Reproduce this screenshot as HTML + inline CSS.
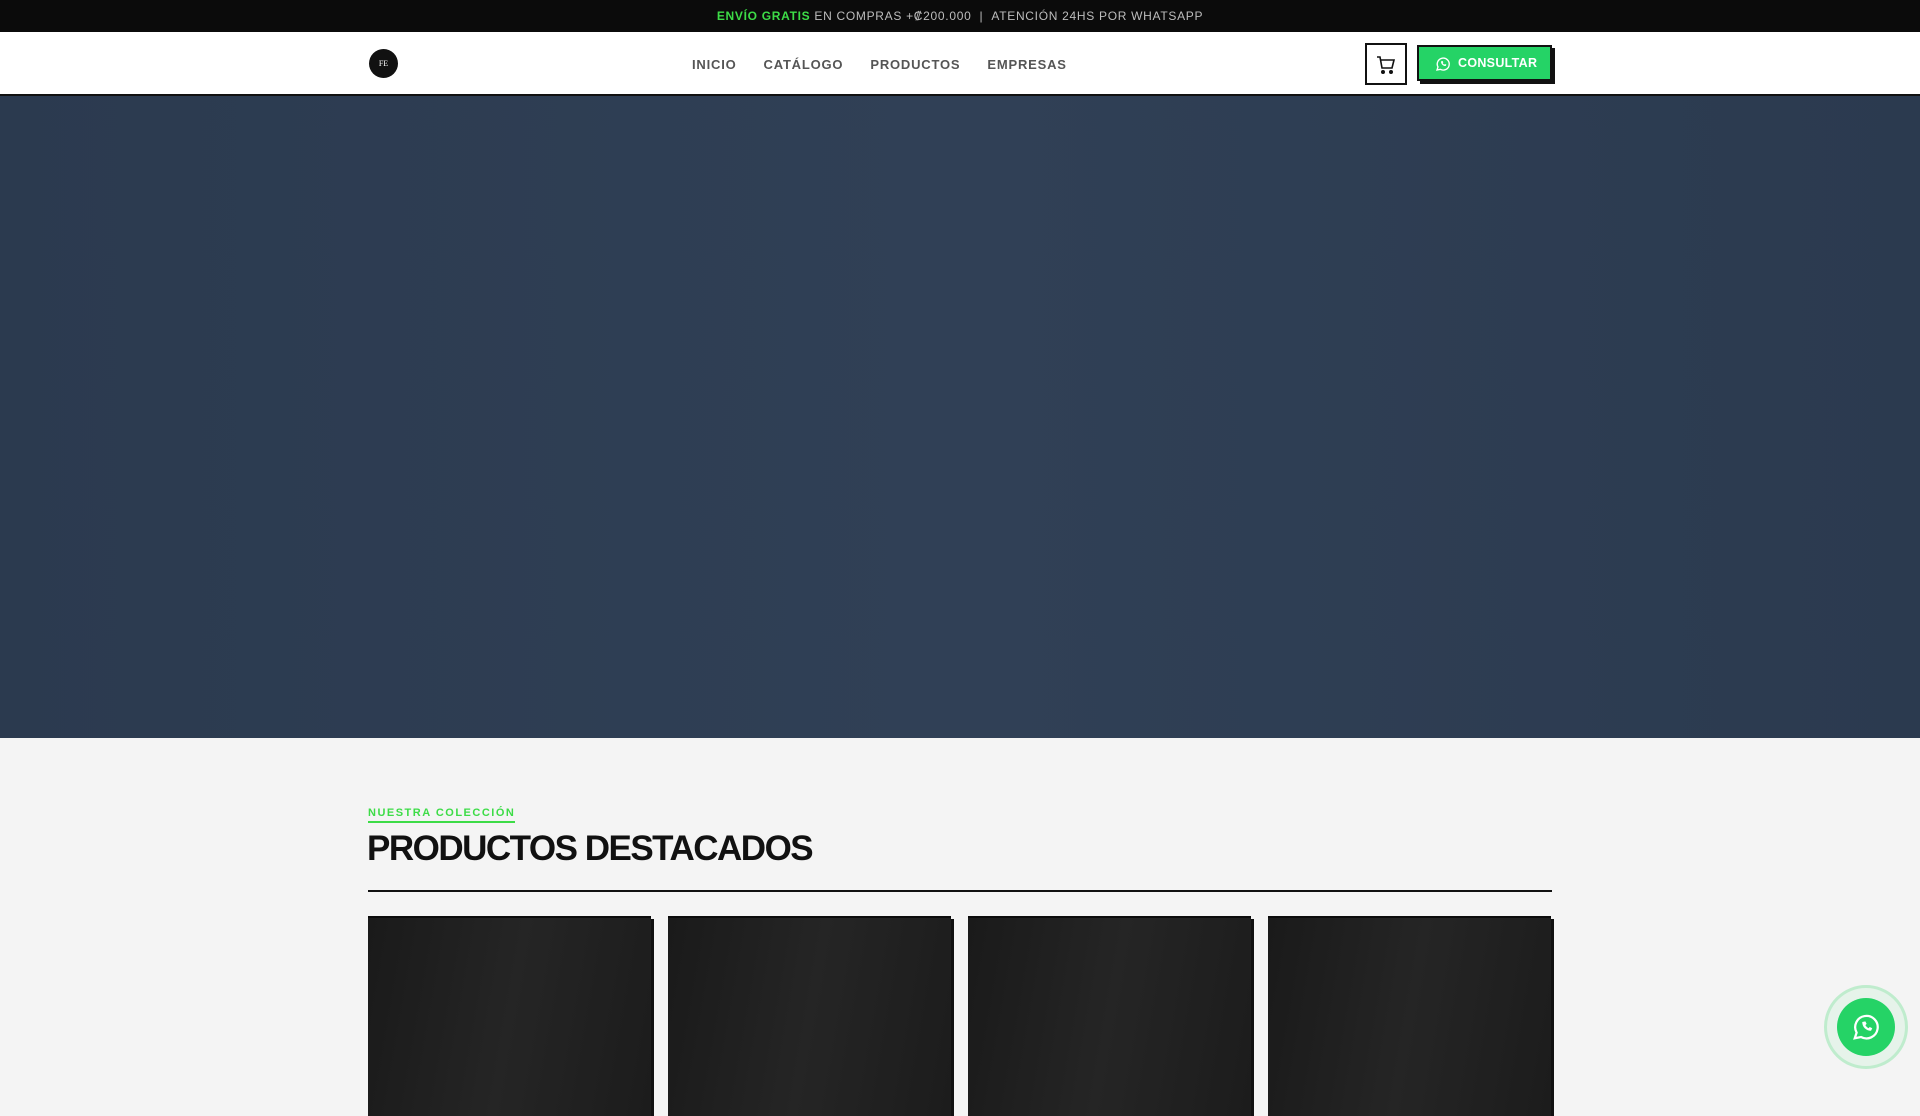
<!DOCTYPE html>
<html><head><meta charset="utf-8"><style>
*{margin:0;padding:0;box-sizing:border-box}
body{width:1920px;height:1080px;overflow:hidden;background:#f4f4f4;font-family:"Liberation Sans",sans-serif;position:relative}
.top{height:32px;background:#0b0b0b;color:#bdbdbd;font-size:12px;letter-spacing:.7px;text-align:center;line-height:32px}
.top b{color:#3ddc47}
.nav{height:64px;background:#fff;border-bottom:2px solid #111;position:relative}
.logo{position:absolute;left:369px;top:17px;width:29px;height:29px;border-radius:50%;background:#111;color:#fff;font-size:8px;font-family:"Liberation Serif",serif;text-align:center;line-height:29px}
.links{position:absolute;left:692px;top:25px;font-size:13px;font-weight:bold;letter-spacing:.8px;color:#555}
.links span{margin-right:27px}
.cart{position:absolute;left:1365px;top:11px;width:42px;height:42px;border:2px solid #111;background:#fff}
.btn{position:absolute;left:1417px;top:13px;width:135px;height:36px;background:#25d366;border:2px solid #111;box-shadow:3px 3px 0 #111;color:#fff;font-size:12.5px;font-weight:bold;letter-spacing:.3px;line-height:32px;padding-left:39px}
.hero{height:642px;background:linear-gradient(90deg,#2b3a4f,#304056 50%,#2b3a4f)}
.kick{position:absolute;left:368px;top:807px;color:#3ddc47;font-size:11px;letter-spacing:1.5px;font-weight:bold;border-bottom:2px solid #3ddc47;padding-bottom:2px}
h1{position:absolute;left:367px;top:829px;font-size:35px;letter-spacing:-1.5px;color:#111}
.rule{position:absolute;left:368px;top:890px;width:1184px;height:2px;background:#111}
.card{position:absolute;top:916px;width:283px;height:200px;background:linear-gradient(100deg,#1a1a1a,#252525 50%,#1c1c1c);border-top:2px solid #0c0c0c;box-shadow:3px 3px 0 #111}
.wa{position:absolute;left:1824px;top:985px;width:84px;height:84px;border-radius:50%;border:3px solid #bfeccd;background:#e6f3ea}
.wa div{position:absolute;left:10px;top:10px;width:58px;height:58px;border-radius:50%;background:#25d366}
</style></head><body>
<div class="top"><b>ENVÍO GRATIS</b> EN COMPRAS +₡200.000 &nbsp;| &nbsp;ATENCIÓN 24HS POR WHATSAPP</div>
<div class="nav">
<div class="logo">FE</div>
<div class="links"><span>INICIO</span><span>CATÁLOGO</span><span>PRODUCTOS</span><span>EMPRESAS</span></div>
<div class="cart"><svg width="38" height="38" viewBox="0 0 38 38" fill="none" stroke="#111" stroke-width="1.6"><path d="M10 12h3l2 11h10l2-8H14"/><circle cx="16" cy="27" r="1.2" fill="#111"/><circle cx="24" cy="27" r="1.2" fill="#111"/></svg></div>
<div class="btn"><svg style="position:absolute;left:16px;top:9px" width="16" height="16" viewBox="0 0 24 24" fill="none" stroke="#fff" stroke-width="2"><path d="M3 21l1.5-4.5A9 9 0 1 1 8 20z"/><path d="M9 8c0 4 3 7 7 7l1-2-2-1-1 1c-1-.5-2-1.5-2.5-2.5l1-1-1-2z" fill="#fff" stroke="none"/></svg>CONSULTAR</div>
</div>
<div class="hero"></div>
<div class="kick">NUESTRA COLECCIÓN</div>
<h1>PRODUCTOS DESTACADOS</h1>
<div class="rule"></div>
<div class="card" style="left:368px"></div>
<div class="card" style="left:668px"></div>
<div class="card" style="left:968px"></div>
<div class="card" style="left:1268px"></div>
<div class="wa"><div><svg style="position:absolute;left:14px;top:14px" width="30" height="30" viewBox="0 0 24 24" fill="none" stroke="#fff" stroke-width="1.8"><path d="M3 21l1.5-4.5A9 9 0 1 1 8 20z"/><path d="M9 8c0 4 3 7 7 7l1-2-2-1-1 1c-1-.5-2-1.5-2.5-2.5l1-1-1-2z" fill="#fff" stroke="none"/></svg></div></div>
</body></html>
